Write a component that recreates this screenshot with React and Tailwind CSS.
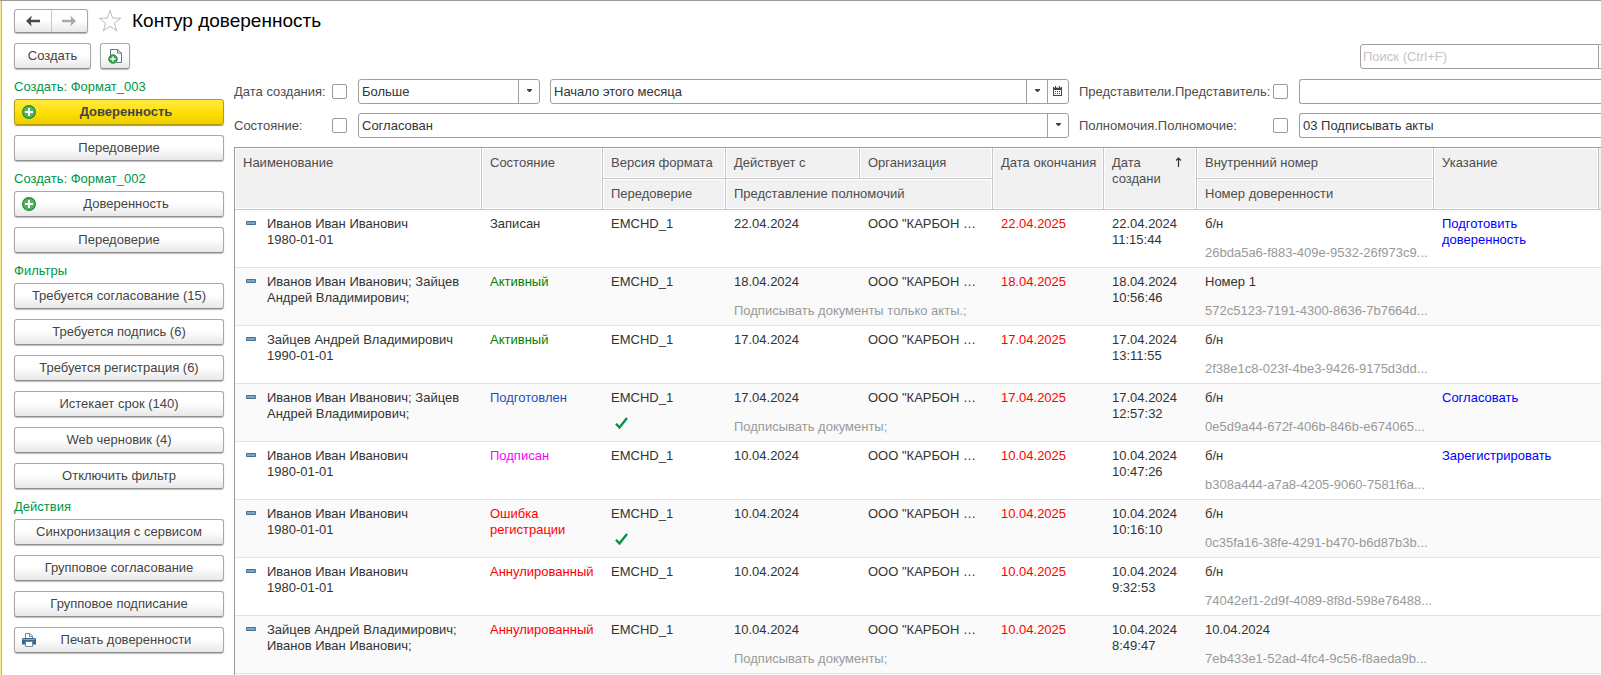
import { useId } from "react";

const BTN =
  "flex items-center rounded-[3px] border border-[#a8a8a8] border-b-[#8f8f8f] bg-linear-to-b from-white from-45% to-[#e8e8e8] text-[#444] shadow-[0_1px_1px_#bbb]";

function PlusCircle({ className }) {
  return (
    <svg className={className} viewBox="0 0 14 14" aria-hidden="true">
      <circle cx="7" cy="7" r="6.4" fill="#4fb856" stroke="#20873a" strokeWidth="1.1" />
      <path d="M7 3v8M3 7h8" stroke="#fff" strokeWidth="2" />
    </svg>
  );
}

function PrinterIcon({ className }) {
  return (
    <svg className={className} viewBox="0 0 14 14" aria-hidden="true">
      <path d="M3.5 6V.5h4.500L10.5 3V6" fill="#fff" stroke="#6f8ba5" />
      <path d="M7.500.5V3.500h3" fill="none" stroke="#6f8ba5" />
      <path d="M1 5h12l1 1v5.500h-3V9H3v2.500H0V6z" fill="#38648c" />
      <path d="M1 6.500h12" stroke="#86a9c8" />
      <path d="M3.500 8.500h7v5h-7z" fill="#fff" stroke="#6f8ba5" />
    </svg>
  );
}

function NewDocIcon() {
  return (
    <svg className="size-4" viewBox="0 0 16 16" aria-hidden="true">
      <path d="M3.500 8V1.500h7L14.500 5v9.500h-5" fill="#fff" stroke="#5f7489" />
      <path d="M10.500 1.500V5h4" fill="none" stroke="#5f7489" />
      <circle cx="6" cy="11" r="4.300" fill="#35a544" stroke="#1d7e36" strokeWidth=".8" />
      <path d="M6 8.300v5.400M3.300 11h5.400" stroke="#fff" strokeWidth="1.300" />
    </svg>
  );
}

function Arrow({ back }) {
  return (
    <svg className="h-3 w-3.5" viewBox="0 0 14 12" aria-hidden="true">
      {back ? (
        <path d="M0 6L5.800.500 4.800 4.700H14v2.600H4.800l1 4.200z" fill="#484848" />
      ) : (
        <path d="M14 6L8.200.500l1 4.200H0v2.600h9.200l-1 4.200z" fill="#a9a9a9" />
      )}
    </svg>
  );
}

function Caret() {
  return (
    <svg className="mb-0.5 h-[3px] w-[5px]" viewBox="0 0 5 3" aria-hidden="true">
      <path d="M0 0h5v1L3 3H2L0 1z" fill="#444" />
    </svg>
  );
}

function CalendarIcon() {
  return (
    <svg className="mr-px mb-0.5 h-2.5 w-[9px]" viewBox="0 0 9 10" aria-hidden="true">
      <path d="M0 1h9v9H0z" fill="#444" />
      <path d="M1 4h7v5H1z" fill="#fff" />
      <path d="M2 0h1v2H2zM6 0h1v2H6z" fill="#444" />
      <path d="M1 1h1v1H1zM3 1h3v1H3zM7 1h1v1H7z" fill="#bbb" />
      <path d="M2 5h1v1H2zM4 5h1v1H4zM6 5h1v1H6zM2 7h1v1H2zM4 7h1v1H4zM6 7h1v1H6z" fill="#444" />
    </svg>
  );
}

function SideButton({ children, icon, primary }) {
  return (
    <button
      type="button"
      className={
        primary
          ? "flex h-[26px] w-full items-center rounded-[3px] border border-[#b09c10] bg-linear-to-b from-[#ffea3c] via-[#ffe000] to-[#ecce00] px-[7px] font-bold text-[#444] shadow-[0_1px_1px_#a89a40]"
          : `${BTN} h-[26px] w-full px-[7px]`
      }
    >
      {icon}
      <span className="grow text-center">{children}</span>
    </button>
  );
}

function Group({ title, children }) {
  return (
    <section>
      <h2 className="mb-1 leading-4 text-[#009646]">{title}</h2>
      <div className="flex flex-col gap-2.5">{children}</div>
    </section>
  );
}

function Combo({ value, label, className, extra }) {
  return (
    <div className={`flex h-[25px] rounded-[3px] border border-[#a0a0a0] ${className}`}>
      <div className="grid min-w-0 grow grid-cols-[1fr_21px]">
        <select aria-label={label} className="col-span-2 col-start-1 row-start-1 min-w-0 appearance-none bg-transparent pl-[3px] text-[#333]">
          <option>{value}</option>
        </select>
        <span className="pointer-events-none col-start-2 row-start-1 flex items-center justify-center border-l border-[#a0a0a0]">
          <Caret />
        </span>
      </div>
      {extra}
    </div>
  );
}

function FilterLabel({ children, className }) {
  const id = useId();
  return (
    <div className={`flex items-center justify-between ${className}`}>
      <label htmlFor={id} className="whitespace-nowrap">{children}</label>
      <input id={id} type="checkbox" className="size-[15px] shrink-0 appearance-none rounded-[2px] border border-[#999] bg-white checked:bg-[#009646]" />
    </div>
  );
}

const TH = "border-r border-b border-[#c6c6c6] bg-[#f1f1f1] px-2 pt-[7px] text-left align-top font-normal leading-4 shadow-[inset_0_0_0_1px_#fff]";

const ROWS = [
  { name: ["Иванов Иван Иванович", "1980-01-01"], state: "Записан", color: "text-[#333]", from: "22.04.2024", to: "22.04.2025", time: "11:15:44", no: "б/н", id: "26bda5a6-f883-409e-9532-26f973c9...", link: "Подготовить доверенность" },
  { name: ["Иванов Иван Иванович; Зайцев", "Андрей Владимирович;"], state: "Активный", color: "text-[#008000]", from: "18.04.2024", to: "18.04.2025", time: "10:56:46", no: "Номер 1", id: "572c5123-7191-4300-8636-7b7664d...", powers: "Подписывать документы только акты.;" },
  { name: ["Зайцев Андрей Владимирович", "1990-01-01"], state: "Активный", color: "text-[#008000]", from: "17.04.2024", to: "17.04.2025", time: "13:11:55", no: "б/н", id: "2f38e1c8-023f-4be3-9426-9175d3dd..." },
  { name: ["Иванов Иван Иванович; Зайцев", "Андрей Владимирович;"], state: "Подготовлен", color: "text-[#1f4fbd]", from: "17.04.2024", to: "17.04.2025", time: "12:57:32", no: "б/н", id: "0e5d9a44-672f-406b-846b-e674065...", powers: "Подписывать документы;", check: true, link: "Согласовать" },
  { name: ["Иванов Иван Иванович", "1980-01-01"], state: "Подписан", color: "text-[#ff00ff]", from: "10.04.2024", to: "10.04.2025", time: "10:47:26", no: "б/н", id: "b308a444-a7a8-4205-9060-7581f6a...", link: "Зарегистрировать" },
  { name: ["Иванов Иван Иванович", "1980-01-01"], state: "Ошибка регистрации", color: "text-[#ff0000]", from: "10.04.2024", to: "10.04.2025", time: "10:16:10", no: "б/н", id: "0c35fa16-38fe-4291-b470-b6d87b3b...", check: true },
  { name: ["Иванов Иван Иванович", "1980-01-01"], state: "Аннулированный", color: "text-[#ff0000]", from: "10.04.2024", to: "10.04.2025", time: "9:32:53", no: "б/н", id: "74042ef1-2d9f-4089-8f8d-598e76488..." },
  { name: ["Зайцев Андрей Владимирович;", "Иванов Иван Иванович;"], state: "Аннулированный", color: "text-[#ff0000]", from: "10.04.2024", to: "10.04.2025", time: "8:49:47", no: "10.04.2024", id: "7eb433e1-52ad-4fc4-9c56-f8aeda9b...", powers: "Подписывать документы;" },
];

function Record({ row }) {
  const tall = "border-b border-[#e3e3e3] px-2 pt-[6px] align-top";
  const top = "h-[29px] px-2 pt-[6px] align-top whitespace-nowrap";
  const low = "h-[29px] border-b border-[#e3e3e3] px-2 pt-[6px] align-top whitespace-nowrap text-[#999]";
  return (
    <tbody className="even:bg-[#fafafa]">
      <tr>
        <td rowSpan={2} className={tall}>
          <div className="flex gap-[11px] pl-[3px]">
            <svg className="mt-[5px] h-1 w-2.5 shrink-0" viewBox="0 0 10 4" aria-hidden="true">
              <path d="M.5.5h9v3h-9z" fill="#74a9d4" stroke="#4b708f" />
            </svg>
            <span className="whitespace-nowrap">{row.name[0]}<br />{row.name[1]}</span>
          </div>
        </td>
        <td rowSpan={2} className={`${tall} ${row.color}`}>{row.state}</td>
        <td className={top}>EMCHD_1</td>
        <td className={top}>{row.from}</td>
        <td className={top}>ООО "КАРБОН …</td>
        <td rowSpan={2} className={`${tall} text-[#ff0000]`}>{row.to}</td>
        <td rowSpan={2} className={tall}>{row.from}<br />{row.time}</td>
        <td className={top}>{row.no}</td>
        <td rowSpan={2} className={tall}>
          {row.link && <a href="#" className="text-[#0000ff]">{row.link}</a>}
        </td>
        <td rowSpan={2} className="border-b border-[#e3e3e3]" />
      </tr>
      <tr>
        <td className="h-[29px] border-b border-[#e3e3e3] px-2 pt-1 align-top">
          {row.check && (
            <svg className="ml-1 h-3 w-[13px]" viewBox="0 0 13 12" aria-label="Да">
              <path d="M1 6.800l3.500 3.700L12 1" fill="none" stroke="#009646" strokeWidth="2.400" />
            </svg>
          )}
        </td>
        <td colSpan={2} className={low}>{row.powers}</td>
        <td className={low}>{row.id}</td>
      </tr>
    </tbody>
  );
}

export default function App() {
  return (
    <div className="flex h-screen overflow-hidden border-t border-[#999] bg-white font-['Liberation_Sans',Arial,sans-serif] text-[13px] leading-4 text-[#4d4d4d]">
      <div className="flex min-w-0 grow border-l border-[#fbe895]">
        <div className="flex min-w-0 grow flex-col border-l border-[#d0bc60] pt-2 pl-3">
          <header className="flex items-center">
            <div className={`${BTN} h-6 w-[74px] divide-x divide-[#c4c4c4]`}>
              <button type="button" aria-label="Назад" className="flex h-full grow items-center justify-center"><Arrow back /></button>
              <button type="button" aria-label="Вперед" className="flex h-full grow items-center justify-center"><Arrow /></button>
            </div>
            <button type="button" aria-label="В избранное" className="mx-2.5">
              <svg className="size-6" viewBox="0 0 24 24" aria-hidden="true">
                <path d="M12 1.500l2.700 7.600 8 .2-6.300 4.900 2.200 7.700L12 17.300l-6.600 4.600 2.200-7.700L1.300 9.300l8-.2z" fill="#fff" stroke="#b4bcc6" />
              </svg>
            </button>
            <h1 className="text-[19px] leading-6 text-black">Контур доверенность</h1>
          </header>

          <div className="mt-2.5 flex items-center">
            <button type="button" className={`${BTN} h-[26px] w-[77px] justify-center`}>Создать</button>
            <button type="button" aria-label="Создать копированием" className={`${BTN} ml-[9px] h-[26px] w-[30px] justify-center`}><NewDocIcon /></button>
            <input type="search" aria-label="Поиск" placeholder="Поиск (Ctrl+F)" className="ml-auto h-[25px] w-[239px] appearance-none rounded-l-[3px] border border-[#a0a0a0] px-[2px] placeholder:text-[#c4c4c4]" />
            <button type="button" aria-label="Найти" className="h-[25px] w-[2px] border-y border-[#a0a0a0]" />
          </div>

          <div className="mt-2.5 flex min-h-0 grow gap-[10px]">
            <nav className="flex w-[210px] shrink-0 flex-col gap-2.5">
              <Group title="Создать: Формат_003">
                <SideButton primary icon={<PlusCircle className="size-3.5" />}>Доверенность</SideButton>
                <SideButton>Передоверие</SideButton>
              </Group>
              <Group title="Создать: Формат_002">
                <SideButton icon={<PlusCircle className="size-3.5" />}>Доверенность</SideButton>
                <SideButton>Передоверие</SideButton>
              </Group>
              <Group title="Фильтры">
                <SideButton>Требуется согласование (15)</SideButton>
                <SideButton>Требуется подпись (6)</SideButton>
                <SideButton>Требуется регистрация (6)</SideButton>
                <SideButton>Истекает срок (140)</SideButton>
                <SideButton>Web черновик (4)</SideButton>
                <SideButton>Отключить фильтр</SideButton>
              </Group>
              <Group title="Действия">
                <SideButton>Синхронизация с сервисом</SideButton>
                <SideButton>Групповое согласование</SideButton>
                <SideButton>Групповое подписание</SideButton>
                <SideButton icon={<PrinterIcon className="size-3.5" />}>Печать доверенности</SideButton>
              </Group>
            </nav>

            <main className="flex min-w-0 grow flex-col gap-[9px] overflow-hidden">
              <div className="flex items-center">
                <FilterLabel className="w-[113px]">Дата создания:</FilterLabel>
                <Combo label="Вид сравнения" value="Больше" className="ml-[11px] w-[182px]" />
                <Combo
                  label="Дата"
                  value="Начало этого месяца"
                  className="ml-[10px] w-[519px]"
                  extra={
                    <button type="button" aria-label="Календарь" className="flex w-[21px] items-center justify-center border-l border-[#a0a0a0]">
                      <CalendarIcon />
                    </button>
                  }
                />
                <FilterLabel className="ml-[10px] w-[209px]">Представители.Представитель:</FilterLabel>
                <input aria-label="Представитель" className="ml-[11px] h-[25px] min-w-0 grow rounded-l-[3px] border border-r-0 border-[#a0a0a0] px-[3px] text-[#333]" />
              </div>
              <div className="flex items-center">
                <FilterLabel className="w-[113px]">Состояние:</FilterLabel>
                <Combo label="Состояние" value="Согласован" className="ml-[11px] w-[711px]" />
                <FilterLabel className="ml-[10px] w-[209px]">Полномочия.Полномочие:</FilterLabel>
                <input aria-label="Полномочие" defaultValue="03 Подписывать акты" className="ml-[11px] h-[25px] min-w-0 grow rounded-l-[3px] border border-r-0 border-[#a0a0a0] px-[3px] text-[#333]" />
              </div>

              <div className="min-h-0 grow overflow-hidden border-t border-l border-[#999]">
                <table className="w-full table-fixed border-separate border-spacing-0 text-[#333]">
                  <colgroup>
                    <col className="w-[247px]" />
                    <col className="w-[121px]" />
                    <col className="w-[123px]" />
                    <col className="w-[134px]" />
                    <col className="w-[133px]" />
                    <col className="w-[111px]" />
                    <col className="w-[93px]" />
                    <col className="w-[237px]" />
                    <col />
                    <col className="w-[2px]" />
                  </colgroup>
                  <thead className="text-[#4d4d4d]">
                    <tr className="h-[31px]">
                      <th rowSpan={2} className={TH}>Наименование</th>
                      <th rowSpan={2} className={TH}>Состояние</th>
                      <th className={TH}>Версия формата</th>
                      <th className={TH}>Действует с</th>
                      <th className={TH}>Организация</th>
                      <th rowSpan={2} className={`${TH} whitespace-nowrap`}>Дата окончания</th>
                      <th rowSpan={2} className={TH}>
                        <div className="flex justify-between">
                          <span>Дата<br />создани</span>
                          <svg className="mt-0.5 mr-1.5 h-2.5 w-[7px] shrink-0" viewBox="0 0 7 10" aria-hidden="true">
                            <path d="M3.500 10V1M1 3.500L3.500 1 6 3.500" fill="none" stroke="#333" strokeWidth="1.200" />
                          </svg>
                        </div>
                      </th>
                      <th className={TH}>Внутренний номер</th>
                      <th rowSpan={2} className={TH}>Указание</th>
                      <td rowSpan={2} className="border-b border-[#c6c6c6] bg-[#f1f1f1]" />
                    </tr>
                    <tr className="h-[31px]">
                      <th className={TH}>Передоверие</th>
                      <th colSpan={2} className={TH}>Представление полномочий</th>
                      <th className={TH}>Номер доверенности</th>
                    </tr>
                  </thead>
                  {ROWS.map((row) => (
                    <Record key={row.id} row={row} />
                  ))}
                </table>
              </div>
            </main>
          </div>
        </div>
      </div>
    </div>
  );
}
